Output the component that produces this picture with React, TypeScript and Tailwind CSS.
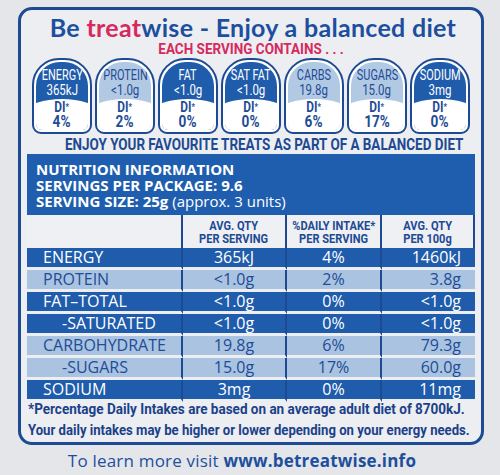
const icons = [
  { name: "ENERGY", val: "365kJ", di: "4%", dark: true },
  { name: "PROTEIN", val: "<1.0g", di: "2%", dark: false },
  { name: "FAT", val: "<1.0g", di: "0%", dark: true },
  { name: "SAT FAT", val: "<1.0g", di: "0%", dark: true },
  { name: "CARBS", val: "19.8g", di: "6%", dark: false },
  { name: "SUGARS", val: "15.0g", di: "17%", dark: false },
  { name: "SODIUM", val: "3mg", di: "0%", dark: true },
];

const rows = [
  { label: "ENERGY", a: "365kJ", b: "4%", c: "1460kJ", dark: true, sub: false },
  { label: "PROTEIN", a: "<1.0g", b: "2%", c: "3.8g", dark: false, sub: false },
  { label: "FAT–TOTAL", a: "<1.0g", b: "0%", c: "<1.0g", dark: true, sub: false },
  { label: "-SATURATED", a: "<1.0g", b: "0%", c: "<1.0g", dark: true, sub: true },
  { label: "CARBOHYDRATE", a: "19.8g", b: "6%", c: "79.3g", dark: false, sub: false },
  { label: "-SUGARS", a: "15.0g", b: "17%", c: "60.0g", dark: false, sub: true },
  { label: "SODIUM", a: "3mg", b: "0%", c: "11mg", dark: true, sub: false },
];

// squeezed text, the label uses a condensed face we don't have
function Sq({ children, className = "scale-x-[0.8] origin-center" }: { children: React.ReactNode; className?: string }) {
  return <span className={`inline-block whitespace-nowrap ${className}`}>{children}</span>;
}

function Icon({ name, val, di, dark }: { name: string; val: string; di: string; dark: boolean }) {
  return (
    <div className="w-[60px] h-[76px] rounded-t-[27px] rounded-b-[9px] border-2 border-[#1d4a92] bg-white p-[2px]">
      <div
        className={`h-full rounded-t-[24px] rounded-b-[6px] overflow-hidden flex flex-col font-['Roboto',sans-serif] ${
          dark ? "bg-[#1f5cab] text-white" : "bg-[#b2c9e4] text-[#1f4c96]"
        }`}
      >
        <div className="flex flex-col items-center pt-[6px] text-[14px] leading-[15px]">
          <Sq className="scale-x-[0.78] origin-center">{name}</Sq>
          <Sq className="scale-x-[0.82] origin-center">{val}</Sq>
        </div>
        <div className="mt-auto -mx-[8px] h-[31px] shrink-0 bg-white rounded-t-[50%_12px] flex flex-col items-center pt-[1px] text-[#1f4c96] font-bold">
          <Sq className="scale-x-[0.85] origin-center text-[14px] leading-[14px]">
            DI<span className="text-[9px] align-top">*</span>
          </Sq>
          <Sq className="scale-x-[0.85] origin-center text-[16px] leading-[15px]">{di}</Sq>
        </div>
      </div>
    </div>
  );
}

function Head({ a, b }: { a: string; b: string }) {
  return (
    <div className="h-[33px] border-r-2 border-[#1d4a92] bg-[#eef0f3] flex flex-col items-center justify-center text-[#1d4a92] font-['Roboto',sans-serif] font-bold text-[13px] leading-[13px]">
      <Sq className="scale-x-[0.85] origin-center">{a}</Sq>
      <Sq className="scale-x-[0.85] origin-center">{b}</Sq>
    </div>
  );
}

export default function App() {
  return (
    <div className="w-[500px] h-[475px] bg-[#e4e6e9] overflow-hidden pt-[7px] pl-[18px] pr-[16px]">
      <div className="h-[438px] border-[3px] border-[#1d4a92] rounded-[14px] bg-[#eceef1] px-[6px] flex flex-col">
        {/* title */}
        <h1 className="mt-[3px] text-center font-['Lato',sans-serif] font-bold text-[25px] leading-[28px] tracking-[0.3px] text-[#1d4f9e] pl-[4px]">
          Be <span className="text-[#d62a5f]">treat</span>wise - Enjoy a balanced diet
        </h1>
        <p className="text-center text-[#d62a5f] font-['Roboto',sans-serif] font-bold text-[15px] leading-[16px]">
          <Sq className="scale-x-[0.9] origin-center">EACH SERVING CONTAINS . . .</Sq>
        </p>

        {/* icons */}
        <div className="flex gap-[3px] pl-[5px] mt-[1px]">
          {icons.map((ic) => (
            <Icon key={ic.name} {...ic} />
          ))}
        </div>

        <p className="text-center text-[#1d4a92] font-['Roboto',sans-serif] font-bold text-[16px] leading-[18px] mt-[2px] pr-[10px]">
          <Sq className="scale-x-[0.84] origin-center">ENJOY YOUR FAVOURITE TREATS AS PART OF A BALANCED DIET</Sq>
        </p>

        {/* nutrition panel */}
        <div className="bg-[#1f5eae] text-white font-['Open_Sans',sans-serif] font-bold text-[15px] leading-[16px] pl-[9px] pt-[7px] pb-[6px]">
          <div>NUTRITION INFORMATION</div>
          <div>SERVINGS PER PACKAGE: 9.6</div>
          <div>
            SERVING SIZE: 25g <span className="font-normal">(approx. 3 units)</span>
          </div>
        </div>

        <div className="grid grid-cols-[156px_104px_95px_1fr] font-['Open_Sans',sans-serif]">
          <div className="h-[33px] border-r-2 border-[#1d4a92] bg-[#eef0f3]" />
          <Head a="AVG. QTY" b="PER SERVING" />
          <Head a="%DAILY INTAKE*" b="PER SERVING" />
          <Head a="AVG. QTY" b="PER 100g" />

          {rows.map((r) => {
            const cell = `h-[22px] border-b-[3px] border-b-[#eceef1] text-[16px] leading-[19px] ${
              r.dark ? "bg-[#1f5cab] text-white" : "bg-[#a9c3e1] text-[#1f4c96]"
            }`;
            return [
              <div key={r.label + "l"} className={`${cell} border-r-2 border-r-[#1d4a92] ${r.sub ? "pl-[35px]" : "pl-[16px]"}`}>
                {r.label}
              </div>,
              <div key={r.label + "a"} className={`${cell} border-r-2 border-r-[#1d4a92] text-center`}>
                {r.a}
              </div>,
              <div key={r.label + "b"} className={`${cell} border-r-2 border-r-[#1d4a92] text-center`}>
                {r.b}
              </div>,
              <div key={r.label + "c"} className={`${cell} text-right pr-[14px]`}>
                {r.c}
              </div>,
            ];
          })}
        </div>

        <div className="-mt-[3px] text-[#1b4189] font-['Roboto',sans-serif] font-bold text-[15px] leading-[21px] pl-[1px]">
          <p>
            <Sq className="scale-x-[0.9] origin-left">*Percentage Daily Intakes are based on an average adult diet of 8700kJ.</Sq>
          </p>
          <p>
            <Sq className="scale-x-[0.875] origin-left">Your daily intakes may be higher or lower depending on your energy needs.</Sq>
          </p>
        </div>
      </div>

      <p className="text-center font-['Open_Sans',sans-serif] text-[17px] leading-[22px] mt-[5px] pr-[18px] text-[#1d4f9e] tracking-[0.2px]">
        To learn more visit <span className="font-bold">www.betreatwise.info</span>
      </p>
    </div>
  );
}
